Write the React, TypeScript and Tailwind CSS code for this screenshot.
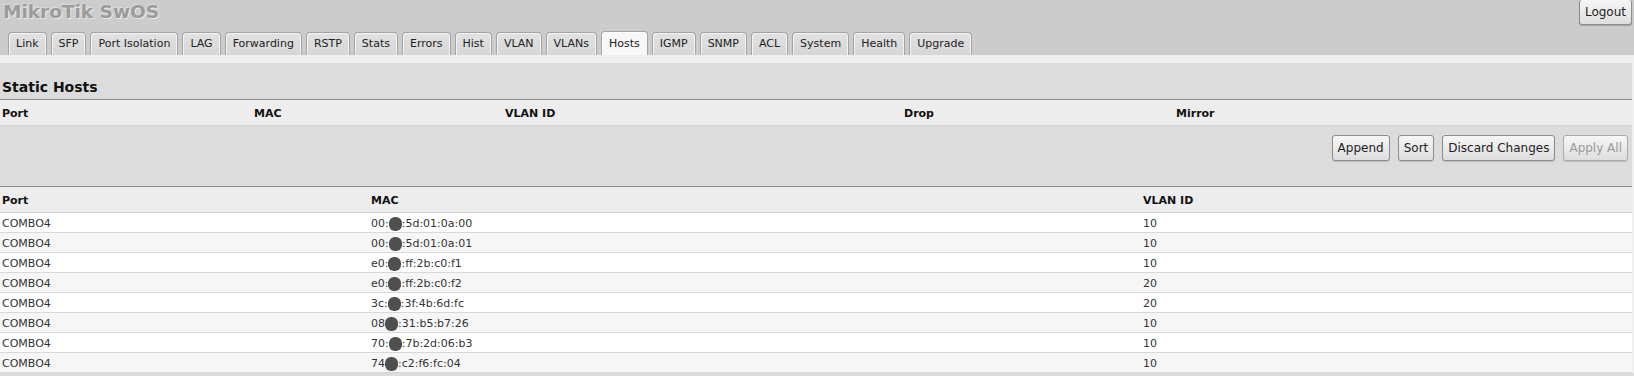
const tabs = [
  "Link",
  "SFP",
  "Port Isolation",
  "LAG",
  "Forwarding",
  "RSTP",
  "Stats",
  "Errors",
  "Hist",
  "VLAN",
  "VLANs",
  "Hosts",
  "IGMP",
  "SNMP",
  "ACL",
  "System",
  "Health",
  "Upgrade",
];

const hosts = [
  { port: "COMBO4", pre: "00:", post: ":5d:01:0a:00", vlan: "10" },
  { port: "COMBO4", pre: "00:", post: ":5d:01:0a:01", vlan: "10" },
  { port: "COMBO4", pre: "e0:", post: ":ff:2b:c0:f1", vlan: "10" },
  { port: "COMBO4", pre: "e0:", post: ":ff:2b:c0:f2", vlan: "20" },
  { port: "COMBO4", pre: "3c:", post: ":3f:4b:6d:fc", vlan: "20" },
  { port: "COMBO4", pre: "08", post: ":31:b5:b7:26", vlan: "10" },
  { port: "COMBO4", pre: "70:", post: ":7b:2d:06:b3", vlan: "10" },
  { port: "COMBO4", pre: "74", post: ":c2:f6:fc:04", vlan: "10" },
];

function Btn({ label, disabled }: { label: string; disabled?: boolean }) {
  return (
    <button
      className={`h-[26px] px-[5px] rounded-[3px] border bg-gradient-to-b from-[#f6f6f6] to-[#dedede] text-[12px] shadow-[0_1px_1px_rgba(0,0,0,0.15)] ${
        disabled ? "border-[#aaaaaa] text-[#999999]" : "border-[#8c8c8c] text-[#222222]"
      }`}
    >
      {label}
    </button>
  );
}

export default function App() {
  return (
    <div className="w-[1634px] h-[376px] overflow-hidden bg-[#f0f0f0] text-[11px] text-[#333333] font-['DejaVu_Sans',sans-serif]">
      {/* Top bar */}
      <div className="h-[55px] bg-[#cccccc] flex justify-between">
        <div className="flex flex-col">
          <div className="h-[32px] pl-[3px] text-[18.5px] leading-[23px] font-bold text-[#9b9b9b] [text-shadow:1px_1px_0_#e8e8e8,-1px_-1px_0_#dadada]">
            MikroTik SwOS
          </div>
          <div className="flex items-end gap-[4px] pl-[8px] h-[23px]">
            {tabs.map((t) =>
              t === "Hosts" ? (
                <div
                  key={t}
                  className="h-[24px] px-[7px] pt-[1px] flex items-center border border-b-0 border-[#a4a4a4] rounded-t-[4px] bg-[#f7f7f7] shadow-[inset_1px_1px_0_#ffffff] text-[#222222]"
                >
                  {t}
                </div>
              ) : (
                <div
                  key={t}
                  className="h-[23px] px-[7px] pt-[1px] flex items-center border border-b-0 border-[#a4a4a4] rounded-t-[4px] bg-gradient-to-b from-[#e2e2e2] to-[#d6d6d6] shadow-[inset_1px_1px_0_#f4f4f4,inset_-1px_0_0_#f4f4f4] text-[#222222]"
                >
                  {t}
                </div>
              )
            )}
          </div>
        </div>
        <div className="pr-[2px]">
          <button className="h-[25px] px-[5px] rounded-[3px] border border-[#8c8c8c] border-t-0 bg-gradient-to-b from-[#f6f6f6] to-[#dedede] text-[12px] text-[#222222] shadow-[0_1px_1px_rgba(0,0,0,0.2)]">
            Logout
          </button>
        </div>
      </div>

      <div className="h-[8px] bg-[#efefef]" />

      <div className="mr-[2px]">
        {/* Static Hosts */}
        <div className="h-[37px] bg-[#dcdcdc] border-b border-[#8a8a8a] flex items-end pl-[2px] pb-[1px] text-[14px] font-bold text-[#111111]">
          Static Hosts
        </div>
        <div className="h-[26px] bg-[#ededed] border-b border-[#d4d4d4] flex pt-[1px] leading-[25px] font-bold text-[#111111]">
          <div className="w-[254px] pl-[2px]">Port</div>
          <div className="w-[251px]">MAC</div>
          <div className="w-[399px]">VLAN ID</div>
          <div className="w-[272px]">Drop</div>
          <div>Mirror</div>
        </div>
        <div className="h-[60px] bg-[#dcdcdc] flex justify-end items-start gap-[8px] pt-[9px] pr-[4px]">
          <Btn label="Append" />
          <Btn label="Sort" />
          <Btn label="Discard Changes" />
          <Btn label="Apply All" disabled />
        </div>

        {/* Hosts table */}
        <div className="border-t border-[#8a8a8a]">
          <div className="h-[26px] bg-[#ededed] border-b border-[#d4d4d4] flex pt-[1px] leading-[25px] font-bold text-[#111111]">
            <div className="w-[371px] pl-[2px]">Port</div>
            <div className="w-[772px]">MAC</div>
            <div>VLAN ID</div>
          </div>
          {hosts.map((h, i) => (
            <div
              key={i}
              className={`h-[20px] border-b border-[#d8d8d8] flex pt-[2px] leading-[17px] ${
                i % 2 === 0 ? "bg-white" : "bg-[#f6f6f6]"
              }`}
            >
              <div className="w-[371px] pl-[2px]">{h.port}</div>
              <div className="w-[772px] flex items-center">
                <span>{h.pre}</span>
                <span className="inline-block w-[13px] h-[14px] rounded-[6px] bg-[#4f4f4f]" />
                <span>{h.post}</span>
              </div>
              <div>{h.vlan}</div>
            </div>
          ))}
        </div>
      </div>
      <div className="h-[4px] bg-[#dcdcdc]" />
    </div>
  );
}
